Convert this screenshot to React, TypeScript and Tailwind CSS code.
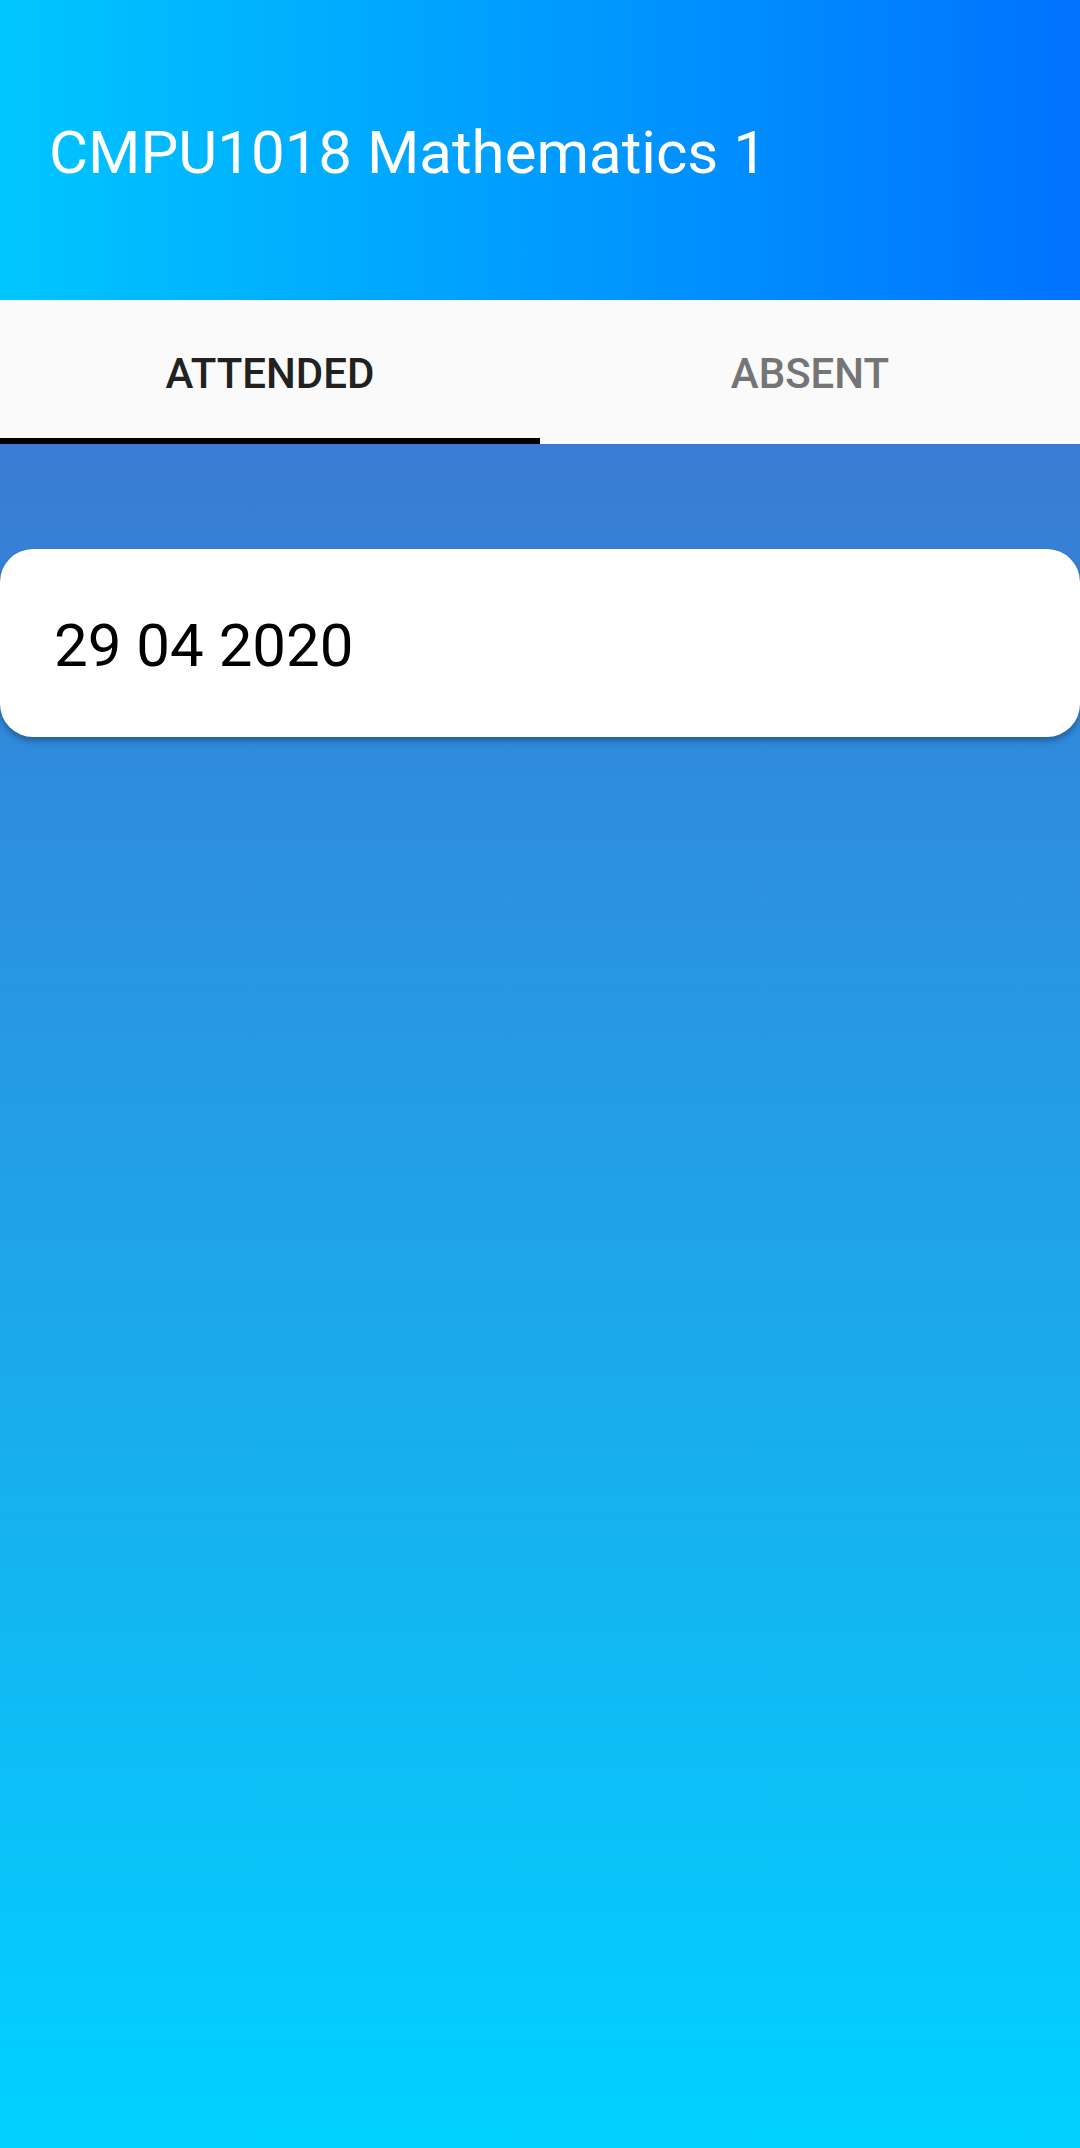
import React from "react";

export default function App() {
  return (
    <div
      className="w-[1080px] h-[2148px] flex flex-col overflow-hidden"
      style={{ fontFamily: "Roboto, 'Noto Sans', sans-serif" }}
    >
      <header className="h-[300px] bg-linear-to-r/srgb from-[#00c6ff] to-[#0072ff] flex items-start pl-[49px] pt-[113px]">
        <h1 className="text-[60px] leading-[80px] text-white font-normal">CMPU1018 Mathematics 1</h1>
      </header>
      <nav className="h-[144px] bg-[#fafafa] flex">
        <div className="flex-1 flex flex-col">
          <div className="flex-1 flex items-center justify-center pt-[8px]">
            <span className="text-[42px] font-medium text-[#212121]">ATTENDED</span>
          </div>
          <div className="h-[6px] bg-black" />
        </div>
        <div className="flex-1 flex flex-col">
          <div className="flex-1 flex items-center justify-center pt-[8px]">
            <span className="text-[42px] font-medium text-[#757575]">ABSENT</span>
          </div>
          <div className="h-[6px]" />
        </div>
      </nav>
      <main className="flex-1 bg-linear-to-b/srgb from-[#3a7bd5] to-[#00d2ff] pt-[105px]">
        <div className="h-[188px] bg-white rounded-[33px] shadow-[0_4px_6px_rgba(0,0,0,0.3)] flex items-center pl-[54px] pt-[6px]">
          <span className="text-[60px] text-black leading-none">29 04 2020</span>
        </div>
      </main>
    </div>
  );
}
